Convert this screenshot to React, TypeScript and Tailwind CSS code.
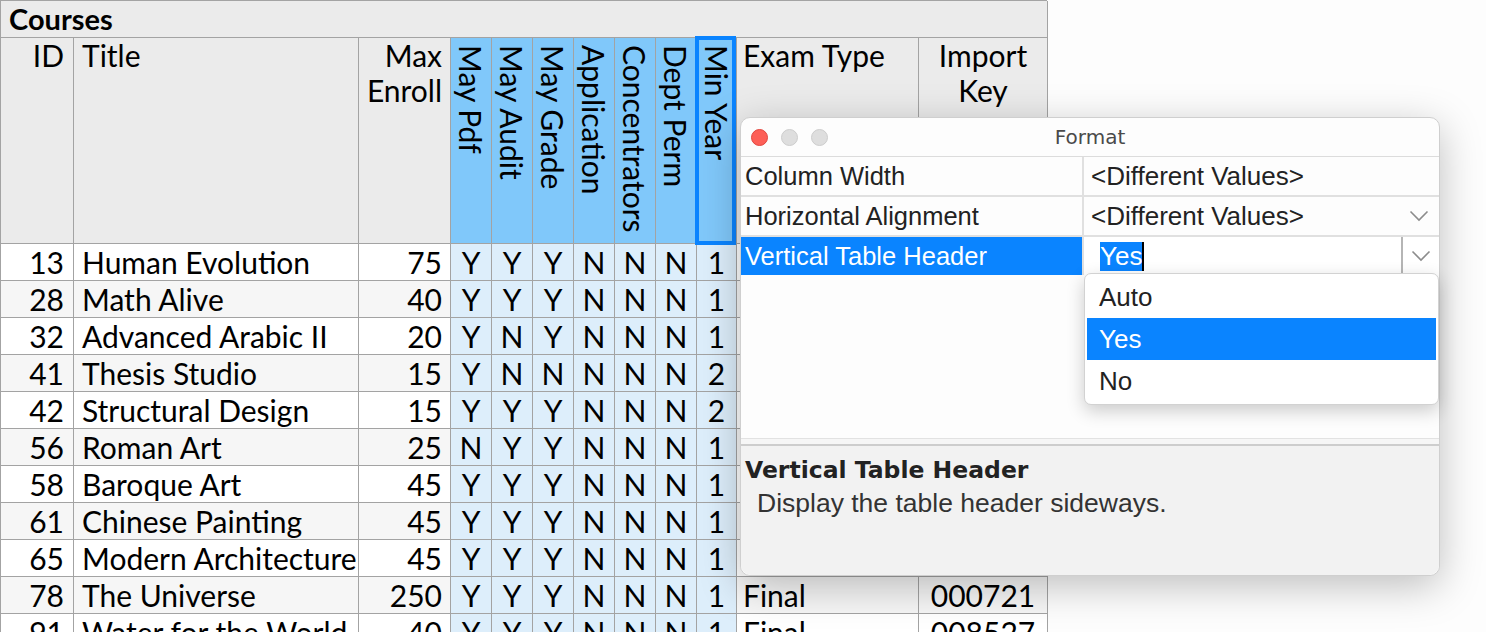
import React from "react";

const rows = [
  ["13", "Human Evolution", "75", "Y", "Y", "Y", "N", "N", "N", "1", "Final", "000534"],
  ["28", "Math Alive", "40", "Y", "Y", "Y", "N", "N", "N", "1", "Final", "000611"],
  ["32", "Advanced Arabic II", "20", "Y", "N", "Y", "N", "N", "N", "1", "Final", "000782"],
  ["41", "Thesis Studio", "15", "Y", "N", "N", "N", "N", "N", "2", "Final", "000215"],
  ["42", "Structural Design", "15", "Y", "Y", "Y", "N", "N", "N", "2", "Final", "000318"],
  ["56", "Roman Art", "25", "N", "Y", "Y", "N", "N", "N", "1", "Final", "000409"],
  ["58", "Baroque Art", "45", "Y", "Y", "Y", "N", "N", "N", "1", "Final", "000466"],
  ["61", "Chinese Painting", "45", "Y", "Y", "Y", "N", "N", "N", "1", "Final", "000503"],
  ["65", "Modern Architecture", "45", "Y", "Y", "Y", "N", "N", "N", "1", "Final", "000540"],
  ["78", "The Universe", "250", "Y", "Y", "Y", "N", "N", "N", "1", "Final", "000721"],
  ["91", "Water for the World", "40", "Y", "Y", "Y", "N", "N", "N", "1", "Final", "008527"],
];

const vertical = ["May Pdf", "May Audit", "May Grade", "Application", "Concentrators", "Dept Perm"];

function Chevron() {
  return (
    <svg width="20" height="12" viewBox="0 0 20 12" fill="none">
      <polyline points="1.5,1.5 10,10 18.5,1.5" stroke="#8c8c8c" strokeWidth="1.6" />
    </svg>
  );
}

function CoursesTable() {
  const cell = "border-r border-b border-[#a3a3a3] h-[37px] leading-[36px] whitespace-nowrap overflow-hidden";
  return (
    <div className="grid w-[1047px] grid-cols-[73px_285px_92px_41px_41px_41px_41px_41px_41px_40px_182px_129px] border-l border-t border-[#a3a3a3] font-['Lato',sans-serif] text-[30px] text-black">
      <div className="col-span-12 h-[37px] border-r border-b border-[#a3a3a3] bg-[#ebebeb] pl-[8px] text-[29px] font-bold leading-[36px]">
        Courses
      </div>

      <div className="h-[206px] border-r border-b border-[#a3a3a3] bg-[#ebebeb] pr-[9px] text-right leading-[35px]">ID</div>
      <div className="h-[206px] border-r border-b border-[#a3a3a3] bg-[#ebebeb] pl-[8px] leading-[35px]">Title</div>
      <div className="h-[206px] border-r border-b border-[#a3a3a3] bg-[#ebebeb] pr-[8px] text-right leading-[35px]">
        Max
        <br />
        Enroll
      </div>
      {vertical.map((v) => (
        <div key={v} className="flex h-[206px] justify-center border-r border-b border-[#a3a3a3] bg-[#80c8fa] pt-[7px]">
          <span className="leading-[30px] [writing-mode:vertical-rl]">{v}</span>
        </div>
      ))}
      <div className="relative flex h-[206px] justify-center border-r border-b border-[#a3a3a3] bg-[#80c8fa] pt-[7px]">
        <span className="leading-[30px] [writing-mode:vertical-rl]">Min Year</span>
        <div className="absolute -top-[2px] -bottom-[2px] -left-[2px] right-0 border-4 border-[#0a84ff]" />
      </div>
      <div className="h-[206px] border-r border-b border-[#a3a3a3] bg-[#ebebeb] pl-[6px] leading-[35px]">Exam Type</div>
      <div className="h-[206px] border-r border-b border-[#a3a3a3] bg-[#ebebeb] text-center leading-[35px]">
        Import
        <br />
        Key
      </div>

      {rows.map((r, i) => {
        const bg = i % 2 === 1 ? "bg-[#f6f6f6]" : "bg-white";
        return (
          <React.Fragment key={r[0]}>
            <div className={`${cell} ${bg} pr-[9px] text-right`}>{r[0]}</div>
            <div className={`${cell} ${bg} pl-[8px]`}>{r[1]}</div>
            <div className={`${cell} ${bg} pr-[8px] text-right`}>{r[2]}</div>
            {r.slice(3, 10).map((v, j) => (
              <div key={j} className={`${cell} bg-[#ddeefb] text-center`}>
                {v}
              </div>
            ))}
            <div className={`${cell} ${bg} pl-[6px]`}>{r[10]}</div>
            <div className={`${cell} ${bg} text-center`}>{r[11]}</div>
          </React.Fragment>
        );
      })}
    </div>
  );
}

function FormatDialog() {
  const label = "flex items-center border-r-2 border-[#e0e0e0] pl-[4px] text-[25.5px]";
  const value = "flex items-center text-[26px]";
  return (
    <div className="absolute left-[740px] top-[117px] flex h-[459px] w-[700px] flex-col rounded-[10px] border border-[#cfcfcf] bg-[#fdfdfd] font-['Liberation_Sans',Arial,sans-serif] text-[#222] shadow-[0_10px_40px_rgba(0,0,0,0.25)]">
      <div className="grid h-[39px] shrink-0 grid-cols-[1fr_auto_1fr] items-center border-b border-[#dcdcdc]">
        <div className="flex gap-[13px] pl-[10px]">
          <span className="h-[17px] w-[17px] rounded-full border border-[#e2463f] bg-[#fd5f57]" />
          <span className="h-[17px] w-[17px] rounded-full border border-[#cdcdcd] bg-[#dedede]" />
          <span className="h-[17px] w-[17px] rounded-full border border-[#cdcdcd] bg-[#dedede]" />
        </div>
        <div className="font-['DejaVu_Sans',sans-serif] text-[20px] text-[#4a4a4a]">Format</div>
        <div />
      </div>

      <div className="relative flex-1">
        <div className="grid grid-cols-[343px_1fr]">
          <div className={`${label} h-[40px] border-b-2`}>Column Width</div>
          <div className={`${value} h-[40px] border-b-2 border-[#e0e0e0] pl-[7px]`}>&lt;Different Values&gt;</div>
          <div className={`${label} h-[40px] border-b-2`}>Horizontal Alignment</div>
          <div className={`${value} h-[40px] justify-between border-b-2 border-[#e0e0e0] pl-[7px] pr-[10px]`}>
            <span>&lt;Different Values&gt;</span>
            <Chevron />
          </div>
          <div className={`${label} h-[38px] bg-[#0a84ff] text-white`}>Vertical Table Header</div>
          <div className="flex h-[38px] items-center bg-white">
            <div className="flex flex-1 items-center pl-[16px]">
              <span className="bg-[#0a84ff] text-[26px] leading-[29px] text-white">Yes</span>
              <span className="h-[29px] w-[2px] bg-black" />
            </div>
            <div className="flex h-full w-[38px] items-center justify-center border-l-2 border-[#b5b5b5]">
              <Chevron />
            </div>
          </div>
        </div>

        <div className="absolute left-[343px] top-[116px] w-[355px] rounded-[7px] border border-[#d2d2d2] bg-white px-[2px] py-[2px] text-[26px] shadow-[0_6px_18px_rgba(0,0,0,0.2)]">
          <div className="flex h-[42px] items-center pl-[12px]">Auto</div>
          <div className="flex h-[42px] items-center bg-[#0a84ff] pl-[12px] text-white">Yes</div>
          <div className="flex h-[42px] items-center pl-[12px]">No</div>
        </div>
      </div>

      <div className="h-[8px] shrink-0 border-t border-b-2 border-t-[#e2e2e2] border-b-[#cdcdcd] bg-[#f6f6f6]" />
      <div className="h-[129px] shrink-0 rounded-b-[10px] bg-[#f2f2f2] pl-[4px] pt-[8px]">
        <div className="font-['DejaVu_Sans',sans-serif] text-[23.5px] font-bold leading-[32px] text-[#222]">Vertical Table Header</div>
        <div className="pl-[12px] text-[26.5px] leading-[34px] text-[#333]">Display the table header sideways.</div>
      </div>
    </div>
  );
}

export default function App() {
  return (
    <div className="relative h-[632px] w-[1486px] overflow-hidden bg-[#fdfdfd]">
      <CoursesTable />
      <FormatDialog />
    </div>
  );
}
